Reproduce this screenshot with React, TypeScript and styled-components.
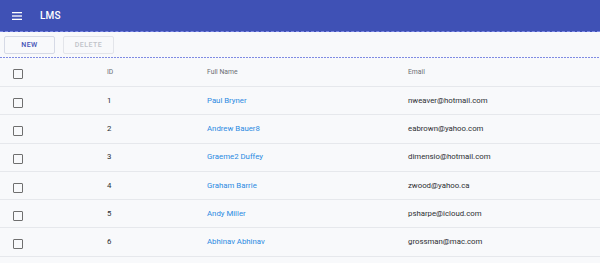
import React from "react";
import styled, { createGlobalStyle } from "styled-components";

const GlobalStyle = createGlobalStyle`
  html, body {
    margin: 0;
    padding: 0;
    background: #f8f9fb;
    font-family: Roboto, "Liberation Sans", Arial, sans-serif;
  }
`;

const dots = `repeating-linear-gradient(to right, #7f8be3 0 2px, transparent 2px 3px) left bottom / 100% 1px no-repeat`;

const AppBar = styled.header`
  height: 31px;
  background: #3f51b5;
  display: flex;
  align-items: center;
  padding: 0 12px;
  gap: 18px;
  color: #fff;
  border-bottom: 1px dashed #7c88e6;
`;

const Title = styled.div`
  font-size: 10px;
  font-weight: 500;
  letter-spacing: 0.2px;
`;

const Toolbar = styled.div`
  height: 26px;
  box-sizing: border-box;
  display: flex;
  align-items: center;
  padding: 0 4px 1px;
  gap: 8px;
  background: ${dots};
`;

const Button = styled.button<{ $disabled?: boolean }>`
  width: 51px;
  height: 18px;
  box-sizing: border-box;
  background: transparent;
  border: 1px solid ${(p) => (p.$disabled ? "#e3e5ea" : "#d6dae6")};
  border-radius: 2px;
  font-family: Roboto, "Liberation Sans", Arial, sans-serif;
  font-size: 7px;
  font-weight: 500;
  letter-spacing: 0.5px;
  color: ${(p) => (p.$disabled ? "#c0c3c9" : "#3f51b5")};
  padding: 0;
`;

const Row = styled.div<{ $header?: boolean }>`
  display: grid;
  grid-template-columns: 107px 100px 201px 1fr;
  align-items: center;
  height: ${(p) => (p.$header ? "29px" : "28.3px")};
  border-bottom: 1px solid #e6e8ec;
  box-sizing: border-box;
  font-size: ${(p) => (p.$header ? "6.8px" : "7.8px")};
  color: ${(p) => (p.$header ? "#6b6e74" : "#2d2f33")};
`;

const CheckCell = styled.div`
  padding-left: 13px;
  display: flex;
  align-items: center;
  padding-top: 4px;
`;

const Box = styled.span`
  width: 10px;
  height: 10px;
  box-sizing: border-box;
  border: 1.5px solid #6f6f6f;
  border-radius: 1px;
`;

const Cell = styled.div<{ $header?: boolean }>`
  white-space: nowrap;
  padding-bottom: ${(p) => (p.$header ? "0" : "1px")};
`;

const NameLink = styled.span`
  color: #2b8ae2;
`;

const rows = [
  { id: 1, name: "Paul Bryner", email: "nweaver@hotmail.com" },
  { id: 2, name: "Andrew Bauer8", email: "eabrown@yahoo.com" },
  { id: 3, name: "Graeme2 Duffey", email: "dimensio@hotmail.com" },
  { id: 4, name: "Graham Barrie", email: "zwood@yahoo.ca" },
  { id: 5, name: "Andy Miller", email: "psharpe@icloud.com" },
  { id: 6, name: "Abhinav Abhinav", email: "grossman@mac.com" },
];

const MenuIcon = () => (
  <svg width="10" height="8" viewBox="0 0 10 8">
    <rect x="0" y="0" width="10" height="1.3" fill="#fff" />
    <rect x="0" y="3.35" width="10" height="1.3" fill="#fff" />
    <rect x="0" y="6.7" width="10" height="1.3" fill="#fff" />
  </svg>
);

export default function App() {
  return (
    <>
      <GlobalStyle />
      <AppBar>
        <MenuIcon />
        <Title>LMS</Title>
      </AppBar>
      <Toolbar>
        <Button>NEW</Button>
        <Button $disabled>DELETE</Button>
      </Toolbar>
      <Row $header>
        <CheckCell>
          <Box />
        </CheckCell>
        <Cell $header>ID</Cell>
        <Cell $header>Full Name</Cell>
        <Cell $header>Email</Cell>
      </Row>
      {rows.map((r) => (
        <Row key={r.id}>
          <CheckCell>
            <Box />
          </CheckCell>
          <Cell>{r.id}</Cell>
          <Cell>
            <NameLink>{r.name}</NameLink>
          </Cell>
          <Cell>{r.email}</Cell>
        </Row>
      ))}
    </>
  );
}
